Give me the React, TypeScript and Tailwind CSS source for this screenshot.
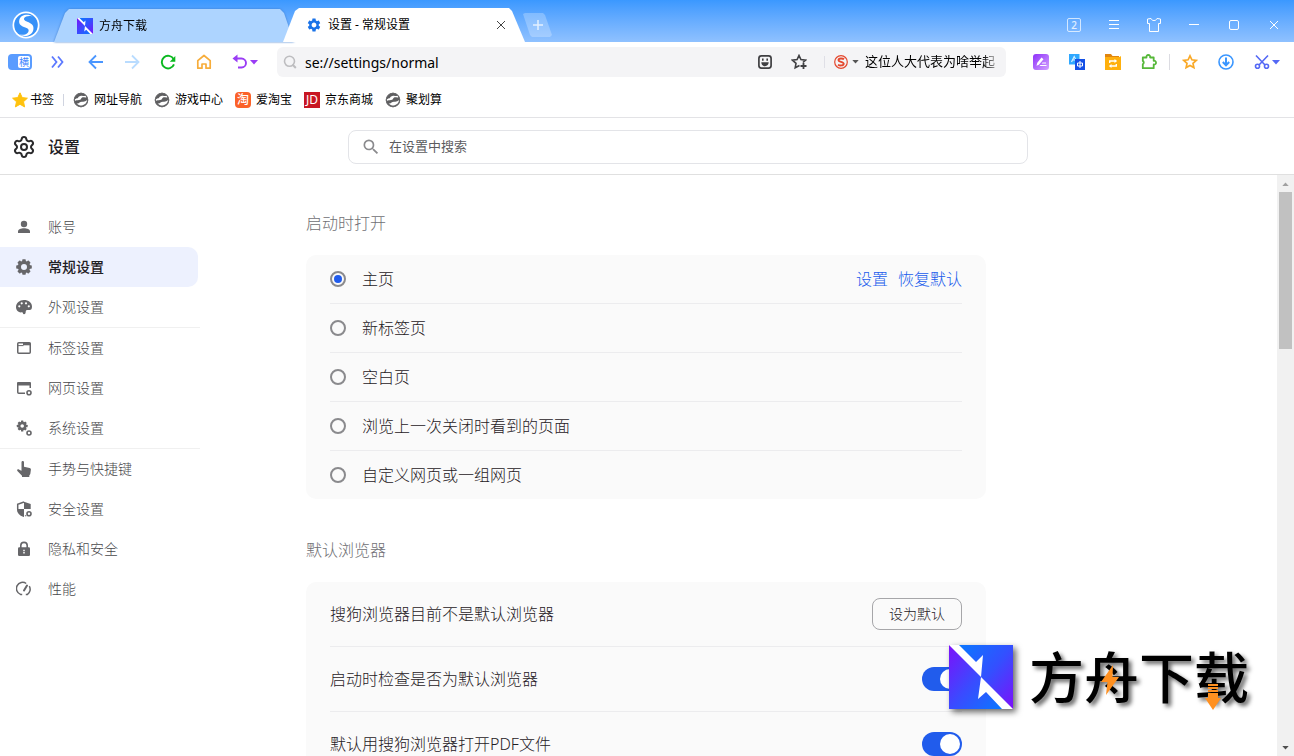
import React, { useState } from 'react';
import { Settings } from 'lucide-react';
import { MdSearch, MdSettings } from 'react-icons/md';

type IconProps = { className?: string };

const TEETH = [0, 45, 90, 135, 180, 225, 270, 315];

const SogouLogo: React.FC<IconProps> = ({ className }) => (
  <svg viewBox="0 0 28 28" className={className}>
    <circle cx="14" cy="14" r="13.5" fill="#fff" />
    <circle cx="14" cy="14" r="11.8" fill="#3791f8" />
    <path d="M20.500 5.400C16 2.200 8.500 3.500 7.300 9c-1 4.800 2.500 6.200 6 7.500 3 1.100 4 2.300 3 4.500-1.300 2.700-5.500 3.400-9 2.500 5 3 12.500 1.300 14-4.600 1.200-4.900-2.500-6.700-6-8.100-2.800-1.100-3.900-2-3.100-3.700C13.200 5 17.500 4.500 20.500 5.400Z" fill="#fff" />
  </svg>
);

// square brand mark, used by the tab and by the watermark
const ArkMark: React.FC<IconProps & { id: string }> = ({ className, id }) => (
  <svg viewBox="0 0 64 64" className={className}>
    <defs>
      <linearGradient id={`${id}-a`} x1="0" y1="0" x2="1" y2="1">
        <stop offset="0" stopColor="#0a78ff" />
        <stop offset="0.500" stopColor="#3350ff" />
        <stop offset="1" stopColor="#7d10fa" />
      </linearGradient>
      <linearGradient id={`${id}-b`} x1="0" y1="0" x2="1" y2="1">
        <stop offset="0" stopColor="#7d10fa" />
        <stop offset="0.500" stopColor="#3b4aff" />
        <stop offset="1" stopColor="#0a78ff" />
      </linearGradient>
    </defs>
    <path d="M0 0h64v64H0z" fill="#fff" />
    <path d="M10 0h54v64L32 32l2-22-7 7Z" fill={`url(#${id}-a)`} />
    <path d="M0 0l32 32-3 22 8-7 16 17H0Z" fill={`url(#${id}-b)`} />
  </svg>
);

const GlobeIcon: React.FC<IconProps> = ({ className }) => (
  <svg viewBox="0 0 16 16" className={className}>
    <circle cx="8" cy="8" r="7.200" fill="#5e5e60" />
    <path d="M1.800 7.600c.8-.8 1.700-.6 2.600-1.300C5.300 5.500 5.800 4 8 3.700c1.800-.2 3 .5 4.600.1l.8 1.400c-1.500.7-2.900-.4-4.300.3-1 .6-.7 1.600-2 2.300-1.600.8-2.700 0-5 1Z" fill="#fff" />
    <path d="M3.600 11.400c1.200.6 2-.2 2.900-.9 1-.8 2.100-.8 3.300-.7 1.600.1 2.900-.3 4.300-1.700-.2 2.900-2.600 5.200-5.300 5.300-2 .1-3.900-.6-5.200-2Z" fill="#fff" />
    <circle cx="8" cy="8" r="6.800" fill="none" stroke="#6a6a6c" strokeWidth="0.900" />
  </svg>
);

const StarIcon: React.FC<IconProps> = ({ className }) => (
  <svg viewBox="0 0 16 16" className={className}>
    <path d="m8 .8 2.200 4.800 5.200.6-3.900 3.500 1.100 5.200L8 12.300l-4.600 2.600 1.100-5.200L.6 6.200l5.200-.6Z" fill="#ffc20e" stroke="#ffc20e" strokeLinejoin="round" />
  </svg>
);

const TaoIcon: React.FC<IconProps> = ({ className }) => (
  <span className={`${className} flex items-center justify-center rounded-sm bg-[#fb6229] text-[12px] leading-none font-medium text-white`}>淘</span>
);

const JdIcon: React.FC<IconProps> = ({ className }) => (
  <span className={`${className} flex items-center justify-center bg-[#c81623] text-[12px] leading-none text-white`}>JD</span>
);

const PersonIcon: React.FC<IconProps> = ({ className }) => (
  <svg viewBox="0 0 16 16" className={className} fill="currentColor">
    <circle cx="8" cy="5" r="3.200" />
    <path d="M2 14v-1.500c0-2.200 3-3.300 6-3.300s6 1.100 6 3.300V14Z" />
  </svg>
);

const CogIcon: React.FC<IconProps> = ({ className }) => (
  <svg viewBox="0 0 16 16" className={className} fill="currentColor">
    {TEETH.map(a => <rect key={a} x="6.200" y="0.200" width="3.600" height="4" rx="0.800" transform={`rotate(${a} 8 8)`} />)}
    <circle cx="8" cy="8" r="4.600" fill="none" stroke="currentColor" strokeWidth="3.200" />
  </svg>
);

const PaletteIcon: React.FC<IconProps> = ({ className }) => (
  <svg viewBox="0 0 16 16" className={className}>
    <path d="M8 1C3.600 1 0 4 0 8c0 3.500 2.500 5.400 4.800 5.400 1 0 1.500-.2 1.900.3.500.6.200 1.500 1.300 1.500 1.300 0 1.700-.9 1.700-2.100 0-1.400.6-2 1.900-2h2c1.600 0 2.400-1.300 2.400-3.600C16 3.600 12.400 1 8 1Z" fill="currentColor" />
    <g fill="#fff">
      <circle cx="3.300" cy="7.300" r="1.100" />
      <circle cx="5.700" cy="4.300" r="1.100" />
      <circle cx="10" cy="4.300" r="1.100" />
      <circle cx="12.800" cy="7.300" r="1.100" />
    </g>
  </svg>
);

const TabWindowIcon: React.FC<IconProps> = ({ className }) => (
  <svg viewBox="0 0 16 16" className={className} fill="none" stroke="currentColor" strokeWidth="1.500">
    <rect x="1.750" y="2.750" width="12.500" height="10.500" rx="1" />
    <path d="M7 4h7.500" strokeWidth="2.600" />
    <path d="M1.500 5.600h6" strokeWidth="1" />
  </svg>
);

const WebIcon: React.FC<IconProps> = ({ className }) => (
  <svg viewBox="0 0 16 16" className={className} fill="none" stroke="currentColor" strokeWidth="1.500">
    <path d="M9 13.250H2.750a1 1 0 0 1-1-1V4M14.250 8V4" />
    <path d="M1 5.500V3a1 1 0 0 1 1-1h12a1 1 0 0 1 1 1v2.500Z" fill="currentColor" stroke="none" />
    <circle cx="13" cy="12.700" r="2" strokeWidth="1.600" />
  </svg>
);

const SystemIcon: React.FC<IconProps> = ({ className }) => (
  <svg viewBox="0 0 16 16" className={className} fill="currentColor">
    {TEETH.map(a => <rect key={a} x="5" y="0.600" width="2.400" height="3" rx="0.500" transform={`rotate(${a} 6.200 6)`} />)}
    <circle cx="6.200" cy="6" r="3" fill="none" stroke="currentColor" strokeWidth="2.400" />
    <circle cx="13" cy="13" r="2" fill="none" stroke="currentColor" strokeWidth="1.600" />
  </svg>
);

const HandIcon: React.FC<IconProps> = ({ className }) => (
  <svg viewBox="0 0 16 16" className={className} fill="currentColor">
    <path d="M5.500 1.200a1.200 1.200 0 0 1 2.500 0v4.600l5.600 1.200c.9.200 1.400.8 1.300 1.700l-.6 4.300-1 1.500V16H6v-1.200L1.400 9.900c-.6-.7-.2-1.600.6-1.700.8 0 1.700.5 3.500 1.600Z" />
  </svg>
);

const ShieldIcon: React.FC<IconProps> = ({ className }) => (
  <svg viewBox="0 0 16 16" className={className}>
    <path d="M8 1 1.700 3.200V8c0 3.500 2.500 6 6.300 7.300" fill="none" stroke="currentColor" strokeWidth="1.500" />
    <path d="M8 .8 14.700 3v5H8ZM1.300 8H8v7.600C4 14.300 1.300 11.500 1.300 8Z" fill="currentColor" />
    <circle cx="13" cy="12.700" r="2" fill="none" stroke="currentColor" strokeWidth="1.600" />
    <path d="M9.700 15.200v-1" stroke="currentColor" strokeWidth="1.400" />
  </svg>
);

const LockIcon: React.FC<IconProps> = ({ className }) => (
  <svg viewBox="0 0 16 16" className={className}>
    <path d="M4.800 7V4.600a3.200 3.200 0 0 1 6.400 0V7" fill="none" stroke="currentColor" strokeWidth="1.600" />
    <rect x="2" y="6.300" width="12" height="8.700" rx="1.200" fill="currentColor" />
    <path d="M8 8.800v1.200M8 10.800v1.700" stroke="#fff" strokeWidth="1.500" />
  </svg>
);

const GaugeIcon: React.FC<IconProps> = ({ className }) => (
  <svg viewBox="0 0 16 16" className={className} fill="none" stroke="currentColor" strokeWidth="1.500">
    <path d="M10.200 2.500A6.200 6.200 0 1 0 4.500 13.400h1.700M9.800 13.400h1.700a6.200 6.200 0 0 0 1.800-8.200" />
    <path d="M11 4.500 8 9.500" strokeWidth="2" strokeLinecap="round" />
  </svg>
);

const Caret: React.FC<IconProps> = ({ className }) => (
  <svg viewBox="0 0 8 5" className={className}><path d="M0 0h8L4 4.500Z" fill="currentColor" /></svg>
);

const BOOKMARKS: { label: string; icon: React.FC<IconProps> }[] = [
  { label: '网址导航', icon: GlobeIcon },
  { label: '游戏中心', icon: GlobeIcon },
  { label: '爱淘宝', icon: TaoIcon },
  { label: '京东商城', icon: JdIcon },
  { label: '聚划算', icon: GlobeIcon },
];

const NAV_GROUPS: { label: string; icon: React.FC<IconProps> }[][] = [
  [
    { label: '账号', icon: PersonIcon },
    { label: '常规设置', icon: CogIcon },
    { label: '外观设置', icon: PaletteIcon },
  ],
  [
    { label: '标签设置', icon: TabWindowIcon },
    { label: '网页设置', icon: WebIcon },
    { label: '系统设置', icon: SystemIcon },
  ],
  [
    { label: '手势与快捷键', icon: HandIcon },
    { label: '安全设置', icon: ShieldIcon },
    { label: '隐私和安全', icon: LockIcon },
    { label: '性能', icon: GaugeIcon },
  ],
];

const STARTUP_OPTIONS = ['主页', '新标签页', '空白页', '浏览上一次关闭时看到的页面', '自定义网页或一组网页'];

const ToolButton: React.FC<{ label: string; wide?: boolean; children: React.ReactNode }> = ({ label, wide, children }) => (
  <button type="button" aria-label={label} className={`flex h-8 shrink-0 items-center justify-center gap-0.5 ${wide ? 'w-[46px]' : 'w-9'}`}>
    {children}
  </button>
);

const TitleBar = () => (
  <header className="flex h-[42px] shrink-0 items-end bg-linear-to-b from-[#3a98ff] to-[#8fc1ff] text-xs">
    <div className="flex h-[34px] w-[54px] shrink-0 items-center pl-3">
      <SogouLogo className="h-7 w-7" />
    </div>
    <div className="w-60 drop-shadow-[0_0_1px_#3f7fd0]">
      <div className="flex h-[33px] items-center gap-1.5 bg-[#add4ff] pl-[23px] [clip-path:polygon(0_100%,11px_4px,15px_0,calc(100%-14px)_0,calc(100%-10px)_4px,100%_100%)]">
        <ArkMark id="tab" className="h-4 w-4" />
        <a href="#ark" className="text-black">方舟下载</a>
      </div>
    </div>
    <div className="z-10 -ml-[11px] flex h-[34px] w-[242px] items-center bg-white pr-4 pl-[23px] [clip-path:polygon(0_100%,12px_3px,16px_0,calc(100%-16px)_0,calc(100%-13px)_3px,100%_100%)]">
      <MdSettings className="h-4 w-4 text-[#1a73e8]" />
      <span className="ml-1.5 flex-1 text-black">设置 - 常规设置</span>
      <button type="button" aria-label="关闭标签" className="flex h-4 w-4 items-center justify-center">
        <svg viewBox="0 0 10 10" className="h-2.5 w-2.5"><path d="m1 1 8 8M9 1 1 9" stroke="#444" /></svg>
      </button>
    </div>
    <button type="button" aria-label="新标签" className="-ml-0.5 mb-[5px] flex h-6 w-[29px] items-center justify-center bg-white/25 [clip-path:polygon(0_1px,2px_0,20px_0,22px_2px,100%_22px,27px_100%,9px_100%,7px_22px)]">
      <svg viewBox="0 0 10 10" className="h-2.5 w-2.5"><path d="M5 0v10M0 5h10" stroke="#e3f0ff" strokeWidth="1.500" /></svg>
    </button>
    <div className="ml-auto flex h-[34px] text-white">
      <button type="button" aria-label="窗口" className="flex w-10 items-center justify-center">
        <span className="flex h-3.5 w-3.5 items-center justify-center rounded-xs border border-white/70 text-[10px] leading-none font-medium text-white/80">2</span>
      </button>
      <button type="button" aria-label="菜单" className="flex w-10 items-center justify-center">
        <svg viewBox="0 0 10 10" className="h-2.5 w-2.5"><path d="M0 .5h10M0 4.500h10M0 8.500h10" stroke="currentColor" /></svg>
      </button>
      <button type="button" aria-label="皮肤" className="flex w-10 items-center justify-center">
        <svg viewBox="0 0 16 16" className="h-4 w-4"><path d="M5 1.500 1.500 2v4.500h2v8h9v-8h2V2L11 1.500c-.4 1.300-1.500 2-3 2s-2.600-.7-3-2Z" fill="none" stroke="currentColor" strokeLinejoin="round" /></svg>
      </button>
      <button type="button" aria-label="最小化" className="flex w-10 items-center justify-center">
        <svg viewBox="0 0 10 10" className="h-2.5 w-2.5"><path d="M0 4.500h10" stroke="currentColor" /></svg>
      </button>
      <button type="button" aria-label="最大化" className="flex w-10 items-center justify-center">
        <span className="h-2.5 w-2.5 rounded-xs border border-white" />
      </button>
      <button type="button" aria-label="关闭" className="flex w-10 items-center justify-center">
        <svg viewBox="0 0 10 10" className="h-2.5 w-2.5"><path d="m1 1 8 8M9 1 1 9" stroke="currentColor" /></svg>
      </button>
    </div>
  </header>
);

const AddressBar = () => (
  <div className="ml-[9px] flex h-[30px] min-w-0 flex-1 items-center rounded-md bg-[#f4f4f6] pr-2.5">
    <svg viewBox="0 0 14 14" className="ml-1.5 h-3.5 w-3.5 shrink-0 text-[#bdbdc0]">
      <circle cx="6.500" cy="6.300" r="5" fill="none" stroke="currentColor" strokeWidth="1.600" />
      <path d="m9.500 9.500 3.300 3.500" stroke="currentColor" strokeWidth="2" />
    </svg>
    <input aria-label="地址" defaultValue="se://settings/normal" className="ml-2 min-w-0 flex-1 bg-transparent pt-0.5 text-sm text-black outline-none" />
    <button type="button" aria-label="表情" className="shrink-0 px-[10px]">
      <svg viewBox="0 0 14 14" className="h-3.5 w-3.5">
        <rect x="0.900" y="0.900" width="12.200" height="12.200" rx="2.500" fill="none" stroke="#3f3f42" strokeWidth="1.700" />
        <path d="M4 3.500h1.600v2.300H4ZM8.400 3.500H10v2.300H8.400ZM3.300 7.300h7.400c0 2.300-1.500 3.900-3.700 3.900S3.300 9.600 3.300 7.300Z" fill="#3f3f42" />
      </svg>
    </button>
    <button type="button" aria-label="收藏本页" className="shrink-0 px-[9px]">
      <svg viewBox="0 0 16 16" className="h-4 w-4" fill="none" stroke="#3f3f42" strokeWidth="1.600">
        <path d="M8.500 11.500 4.200 13.800 5 9.300 1.500 6.200l4.600-.6L8 1.500l1.900 4.100 4.600.6-2.600 2.300" />
        <path d="M12.500 9v6M9.500 12h6" strokeWidth="1.800" />
      </svg>
    </button>
    <span className="ml-2 h-3 w-px shrink-0 bg-[#dfdfe6]" />
    <button type="button" aria-label="搜索引擎" className="ml-[9px] flex shrink-0 items-center gap-1 text-[#555]">
      <svg viewBox="0 0 14 14" className="h-3.5 w-3.5" fill="none" stroke="#e4482e">
        <circle cx="7" cy="7" r="6.300" strokeWidth="1.200" />
        <path d="M10 4.300C8.800 3.300 4.500 3 4.500 5.200c0 2 5.200 1.200 5.200 3.500 0 2.200-4 2-5.700 1" strokeWidth="1.900" />
      </svg>
      <Caret className="h-1 w-[7px]" />
    </button>
    <a href="#news" className="ml-1.5 w-[131px] shrink-0 text-[13px] whitespace-nowrap text-black mask-r-from-90% mask-r-to-105%">这位人大代表为啥举起</a>
  </div>
);

const ToolBar = () => (
  <div className="flex h-10 shrink-0 items-center bg-white pr-1">
    <button type="button" aria-label="横向标签" className="flex h-8 w-10 shrink-0 items-center justify-center">
      <span className="flex h-4 w-6 items-center justify-end rounded-sm bg-[#5a9cff] p-0.5">
        <span className="flex h-3 w-3 items-center justify-center rounded-xs bg-white text-[10px] leading-none text-[#3d86ff]">横</span>
      </span>
    </button>
    <ToolButton label="展开">
      <svg viewBox="0 0 14 14" className="h-3.5 w-3.5" fill="none" stroke="#5b78ff" strokeWidth="1.800"><path d="m1 1.500 4.500 5.500L1 12.500M7 1.500 11.500 7 7 12.500" /></svg>
    </ToolButton>
    <span className="w-0.5 shrink-0" />
    <ToolButton label="后退">
      <svg viewBox="0 0 16 16" className="h-4 w-4" fill="none" stroke="#4a96ff" strokeWidth="1.800"><path d="M15 8H2M8 1.500 1.500 8 8 14.500" /></svg>
    </ToolButton>
    <ToolButton label="前进">
      <svg viewBox="0 0 16 16" className="h-4 w-4" fill="none" stroke="#b9dcff" strokeWidth="1.800"><path d="M1 8h13M8 1.500 14.500 8 8 14.500" /></svg>
    </ToolButton>
    <ToolButton label="刷新">
      <svg viewBox="0 0 16 16" className="h-4 w-4"><path d="M14 10.400A6.300 6.300 0 1 1 13.600 5" fill="none" stroke="#0ab81f" strokeWidth="1.900" /><path d="M15.300 2v5.700H9.800Z" fill="#0ab81f" /></svg>
    </ToolButton>
    <ToolButton label="主页">
      <svg viewBox="0 0 16 16" className="h-4 w-4" fill="none" stroke="#f7ad3b" strokeWidth="1.700"><path d="M1.800 14.200V6.700L8 1.500l6.200 5.200v7.500H10V10H6v4.200Z" strokeLinejoin="round" /></svg>
    </ToolButton>
    <ToolButton label="恢复" wide>
      <svg viewBox="0 0 16 16" className="h-4 w-4"><path d="M3 4.500h6.500a4.500 4.500 0 0 1 0 9H6" fill="none" stroke="#9a3cf5" strokeWidth="1.900" /><path d="M5.500.5v8l-5-4Z" fill="#9a3cf5" /></svg>
      <Caret className="h-[5px] w-2 text-[#9a3cf5]" />
    </ToolButton>
    <AddressBar />
    <div className="ml-[17px] flex shrink-0 items-center">
      <ToolButton label="笔记">
        <svg viewBox="0 0 16 16" className="h-4 w-4">
          <defs><linearGradient id="note" x1="0" y1="0" x2="1" y2="1"><stop offset="0" stopColor="#8e30fa" /><stop offset="1" stopColor="#d3a2ff" /></linearGradient></defs>
          <rect width="16" height="16" rx="3" fill="url(#note)" />
          <path d="m3.500 11.800.8-3L8.500 3.500l2 1.700-4.600 5.500ZM9.500 8.500H13v1H8.700ZM7.500 11h6v1h-7Z" fill="#fff" />
        </svg>
      </ToolButton>
      <ToolButton label="翻译">
        <svg viewBox="0 0 16 16" className="h-4 w-4" fill="none">
          <path d="M0 0h10.500v10.500H0Z" fill="#2fa8ff" /><path d="M2.500 8 5.200 2.500 7.500 7M3.500 6h3" stroke="#d6efff" strokeWidth="1.200" />
          <path d="M6 5h10v11H6Z" fill="#1450e6" /><path d="M8.500 9h5v3h-5ZM11 7v7" stroke="#fff" />
        </svg>
      </ToolButton>
      <ToolButton label="文件">
        <svg viewBox="0 0 16 16" className="h-4 w-4" fill="none">
          <path d="M0 0h6l1.500 2H14v4H0Z" fill="#e0860f" /><path d="M0 3h14.500L16 2v14H0Z" fill="#ffb00d" />
          <path d="M4.700 9V7H11M11.300 10v2H5" stroke="#fff" strokeWidth="1.400" /><path d="m9.500 5 2.700 2-2.700 2ZM6.500 10l-2.700 2 2.700 2Z" fill="#fff" />
        </svg>
      </ToolButton>
      <ToolButton label="扩展">
        <svg viewBox="0 0 16 16" className="h-4 w-4"><path d="M1.800 3.500h3.700a1.900 1.900 0 1 1 3.600 0h3.600v3.300a1.900 1.900 0 1 1 0 3.700v3.700H1.800v-4a1.900 1.900 0 0 0 0-3.300Z" fill="none" stroke="#56b839" strokeWidth="1.800" strokeLinejoin="round" /></svg>
      </ToolButton>
      <span className="mx-0.5 h-4 w-px bg-[#dcdce2]" />
      <ToolButton label="收藏夹">
        <svg viewBox="0 0 16 16" className="h-4 w-4"><path d="m8 1.800 1.900 4 4.400.5-3.300 3 .9 4.300L8 11.500l-3.900 2.100.9-4.300-3.300-3 4.400-.5Z" fill="none" stroke="#f9a928" strokeWidth="1.700" /></svg>
      </ToolButton>
      <ToolButton label="下载">
        <svg viewBox="0 0 16 16" className="h-4 w-4" fill="none" stroke="#3a96ff" strokeWidth="1.600"><circle cx="8" cy="8" r="7" /><path d="M8 3.500V11" strokeWidth="2" /><path d="m4.800 8 3.200 3.300L11.200 8" strokeWidth="2" /></svg>
      </ToolButton>
      <ToolButton label="截图" wide>
        <svg viewBox="0 0 16 16" className="h-4 w-4" fill="none" stroke="#5468f5" strokeWidth="1.600"><path d="M2 1.500 11 11M14 1.500 5 11" /><circle cx="3.500" cy="12.300" r="2" /><circle cx="12.500" cy="12.300" r="2" /></svg>
        <Caret className="h-[5px] w-2 text-[#5468f5]" />
      </ToolButton>
    </div>
  </div>
);

const BookmarkBar = () => (
  <nav className="flex h-9 shrink-0 items-center gap-3 border-b border-[#e3e3e6] bg-white px-3 text-xs text-black">
    <a href="#bookmarks" className="flex items-center gap-0.5">
      <StarIcon className="h-4 w-4" />
      书签
    </a>
    <span className="-mx-[3px] h-3 w-px bg-[#d0d4e0]" />
    {BOOKMARKS.map(({ label, icon: BookmarkIcon }) => (
      <a key={label} href={`#${label}`} className="flex items-center gap-[5px]">
        <BookmarkIcon className="h-4 w-4" />
        {label}
      </a>
    ))}
  </nav>
);

const SideNav: React.FC<{ active: string; onSelect: (label: string) => void }> = ({ active, onSelect }) => (
  <nav className="w-[200px] shrink-0 divide-y divide-[#f0f0f0] pt-8">
    {NAV_GROUPS.map((group, i) => (
      <div key={i}>
        {group.map(({ label, icon: NavIcon }) => (
          <button
            key={label}
            type="button"
            onClick={() => onSelect(label)}
            className={`flex h-10 w-[198px] items-center gap-4 rounded-r-[10px] pl-4 text-sm ${active === label ? 'bg-[#edf1fe] font-medium text-[#1f2024]' : 'font-light text-[#48484b]'}`}
          >
            <NavIcon className="h-4 w-4 text-[#666669]" />
            {label}
          </button>
        ))}
      </div>
    ))}
  </nav>
);

const Toggle: React.FC<{ id: string }> = ({ id }) => (
  <input
    id={id}
    type="checkbox"
    defaultChecked
    className="h-6 w-10 appearance-none rounded-full bg-[#ccc] p-0.5 before:block before:h-5 before:w-5 before:rounded-full before:bg-white checked:bg-[#215cec] checked:before:ml-4"
  />
);

const SectionTitle: React.FC<{ children: React.ReactNode }> = ({ children }) => (
  <h2 className="mb-5 text-base font-light text-[#707074]">{children}</h2>
);

const ScrollBar = () => (
  <div className="flex w-[17px] shrink-0 flex-col items-center justify-between bg-[#f1f1f1]">
    <div className="flex w-full flex-col items-center">
      <span className="flex h-[17px] items-center text-[#a0a0a0]"><Caret className="h-1 w-[7px] rotate-180" /></span>
      <span className="h-[157px] w-[13px] bg-[#c1c1c1]" />
    </div>
    <span className="flex h-[17px] items-center text-[#505050]"><Caret className="h-1 w-[7px]" /></span>
  </div>
);

const Watermark = () => (
  <div className="pointer-events-none absolute right-[45px] bottom-[47px] flex items-center gap-4">
    <ArkMark id="mark" className="h-16 w-16 drop-shadow-[3px_3px_3px_rgba(0,0,0,0.6)]" />
    <div className="relative text-[55px] leading-16 font-medium text-black [text-shadow:3px_3px_4px_rgba(0,0,0,0.6)]">
      方舟下载
      <svg viewBox="0 0 18 30" className="absolute top-5 left-[72px] h-[30px] w-[18px]"><path d="M12 0 0 17h6.500L5 30l13-18h-6.500Z" fill="#ff9020" /></svg>
      <svg viewBox="0 0 16 26" className="absolute top-[39px] left-[176px] h-[26px] w-4">
        <path d="M3 0h10v2H3ZM3 3h10v2H3ZM3 6h10v2H3ZM3 9h10v5h3L8 26 0 14h3Z" fill="#ff9020" />
      </svg>
    </div>
  </div>
);

const App: React.FC = () => {
  const [active, setActive] = useState('常规设置');
  const [startup, setStartup] = useState('主页');

  return (
    <div className="relative flex h-screen flex-col overflow-hidden bg-white font-['Noto_Sans','Noto_Sans_CJK_SC',sans-serif]">
      <TitleBar />
      <ToolBar />
      <BookmarkBar />

      <div className="flex h-[57px] shrink-0 items-center border-b border-[#e0e0e0] pt-px">
        <div className="flex w-[348px] shrink-0 items-center gap-3 pl-3">
          <Settings className="h-6 w-6 text-[#2a2a2c]" />
          <h1 className="text-base font-medium text-[#1f2024]">设置</h1>
        </div>
        <label className="flex h-[34px] w-full max-w-[680px] items-center gap-2 rounded-lg border border-[#e3e4e8] pl-3 text-[13px] text-[#5c5c5f]">
          <MdSearch className="h-5 w-5 shrink-0 text-[#8a8a8d]" />
          <input type="search" aria-label="搜索" placeholder="在设置中搜索" className="min-w-0 flex-1 bg-transparent outline-none placeholder:text-[#5c5c5f]" />
        </label>
      </div>

      <div className="flex min-h-0 flex-1">
        <SideNav active={active} onSelect={setActive} />

        <main className="min-w-0 flex-1 overflow-hidden pt-9 pl-[106px] text-base font-light text-[#1f2024]">
          <section className="mb-[39px] max-w-[680px]">
            <SectionTitle>启动时打开</SectionTitle>
            <div className="divide-y divide-[#ececee] rounded-[10px] bg-[#fafafa] px-6">
              {STARTUP_OPTIONS.map(option => (
                <div key={option} className="box-content flex h-12 items-center">
                  <label className="flex flex-1 items-center gap-4">
                    <input
                      type="radio"
                      name="startup"
                      checked={startup === option}
                      onChange={() => setStartup(option)}
                      className="flex h-4 w-4 appearance-none items-center justify-center rounded-full border-2 border-[#8a8a8d] checked:before:h-2 checked:before:w-2 checked:before:rounded-full checked:before:bg-[#215cec]"
                    />
                    {option}
                  </label>
                  {option === '主页' && (
                    <div className="flex gap-2.5 text-[#215cec]">
                      <a href="#set">设置</a>
                      <a href="#reset">恢复默认</a>
                    </div>
                  )}
                </div>
              ))}
            </div>
          </section>

          <section className="max-w-[680px]">
            <SectionTitle>默认浏览器</SectionTitle>
            <div className="divide-y divide-[#ececee] rounded-[10px] bg-[#fafafa] px-6">
              <div className="box-content flex h-16 items-center justify-between">
                搜狗浏览器目前不是默认浏览器
                <button type="button" className="h-8 w-[90px] rounded-lg border border-[#a6a6a9] text-sm">设为默认</button>
              </div>
              <div className="box-content flex h-16 items-center justify-between">
                <label htmlFor="check-default">启动时检查是否为默认浏览器</label>
                <Toggle id="check-default" />
              </div>
              <div className="box-content flex h-16 items-center justify-between">
                <label htmlFor="open-pdf">默认用搜狗浏览器打开PDF文件</label>
                <Toggle id="open-pdf" />
              </div>
            </div>
          </section>
        </main>

        <ScrollBar />
      </div>

      <Watermark />
    </div>
  );
};

export default App;
